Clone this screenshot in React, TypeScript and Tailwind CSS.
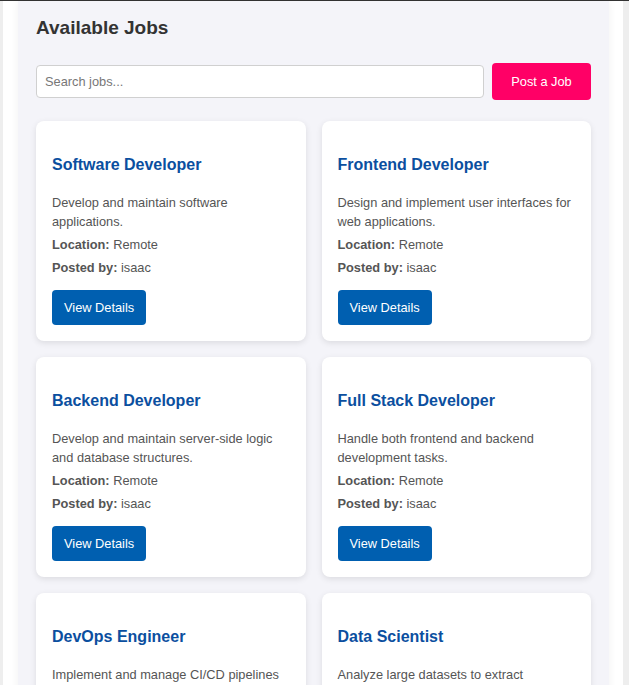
import React from "react";

const jobs = [
  { title: "Software Developer", desc: "Develop and maintain software applications." },
  { title: "Frontend Developer", desc: "Design and implement user interfaces for web applications." },
  { title: "Backend Developer", desc: "Develop and maintain server-side logic and database structures." },
  { title: "Full Stack Developer", desc: "Handle both frontend and backend development tasks." },
  { title: "DevOps Engineer", desc: "Implement and manage CI/CD pipelines and infrastructure." },
  { title: "Data Scientist", desc: "Analyze large datasets to extract meaningful insights." },
];

function JobCard({ title, desc }: { title: string; desc: string }) {
  return (
    <div className="bg-white rounded-[8px] shadow-[0_2px_6px_rgba(0,0,0,0.1)] px-4 pt-4 pb-4 flex flex-col items-start">
      <h3 className="mt-[18px] mb-[18px] text-[16px] leading-[20px] font-bold text-[#0b4f9f]">{title}</h3>
      <p className="text-[12.8px] leading-[19px] text-[#555] mb-[4px]">{desc}</p>
      <p className="text-[12.8px] leading-[19px] text-[#555] mb-[4px]">
        <span className="font-bold">Location:</span> Remote
      </p>
      <p className="text-[12.8px] leading-[19px] text-[#555]">
        <span className="font-bold">Posted by:</span> isaac
      </p>
      <button className="mt-[13px] h-[35px] px-[12px] bg-[#005fb0] text-white text-[12.8px] rounded-[4px]">
        View Details
      </button>
    </div>
  );
}

export default function App() {
  return (
    <div className="min-h-screen bg-[#eeeeee] border-t border-[#333333] flex pl-[3px] pr-[6px] font-['Liberation_Sans',Arial,sans-serif]">
      <div className="flex-1 bg-white pl-[15px] pr-[14px]">
        <div className="bg-[#f4f4f9] shadow-[0_0_8px_rgba(0,0,0,0.06)] px-[18px] pt-[15px] pb-[20px]">
          <h2 className="h-[24px] leading-[24px] text-[19px] font-bold text-[#333]">Available Jobs</h2>
          <div className="mt-[23px] flex items-center gap-2">
            <input
              type="text"
              placeholder="Search jobs..."
              className="flex-1 h-[33px] bg-white border border-[#d0d0d0] rounded-[4px] px-[8px] text-[12.8px] text-[#333] placeholder:text-[#777] outline-none"
            />
            <button className="h-[37px] w-[99px] bg-[#ff0066] text-white text-[12.8px] rounded-[4px]">
              Post a Job
            </button>
          </div>
          <div className="mt-[21px] grid grid-cols-2 gap-4">
            {jobs.map((j) => (
              <JobCard key={j.title} title={j.title} desc={j.desc} />
            ))}
          </div>
        </div>
      </div>
    </div>
  );
}
